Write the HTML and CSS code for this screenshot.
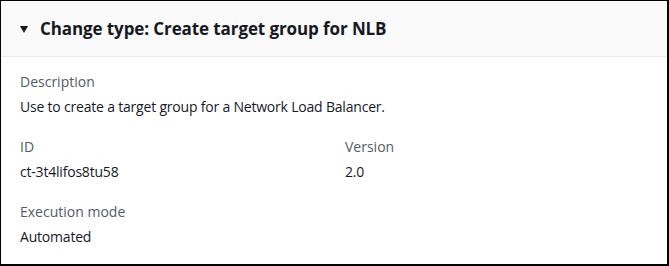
FILE: index.html
```html
<!DOCTYPE html>
<html lang="en">
   <head>
      <meta charset="UTF-8">
      <title>Change type</title>
      <link rel="stylesheet" href="styles.css">
   </head>
   <body>
      <div class="panel">
         <div class="panel-header">
            <span class="caret"></span>
            <h2>Change type: Create target group for NLB</h2>
         </div>
         <div class="panel-body">
            <div class="field">
               <div class="label">Description</div>
               <div class="value">Use to create a target group for a Network Load Balancer.</div>
            </div>
            <div class="row">
               <div class="field">
                  <div class="label">ID</div>
                  <div class="value">ct-3t4lifos8tu58</div>
               </div>
               <div class="field">
                  <div class="label">Version</div>
                  <div class="value">2.0</div>
               </div>
            </div>
            <div class="field">
               <div class="label">Execution mode</div>
               <div class="value">Automated</div>
            </div>
         </div>
      </div>
   </body>
</html>
```

FILE: styles.css
```css
* {
margin: 0;
padding: 0;
box-sizing: border-box;
}
body {
width: 669px;
height: 266px;
background: #fff;
font-family: "Open Sans", "Noto Sans", sans-serif;
color: #16191f;
}
.panel {
height: 266px;
border-top: 1px solid #000;
border-left: 1px solid #000;
border-right: 2px solid #000;
border-bottom: 2px solid #000;
}
.panel-header {
height: 56px;
background: #fafafa;
border-bottom: 1px solid #eaeded;
display: flex;
align-items: center;
padding-left: 19px;
}
.caret {
width: 0;
height: 0;
border-left: 4px solid transparent;
border-right: 4px solid transparent;
border-top: 7px solid #16191f;
margin-right: 12px;
margin-top: 1px;
}
h2 {
font-size: 17px;
font-weight: 700;
letter-spacing: -0.1px;
color: #16191f;
}
.panel-body {
padding: 15px 20px 0 19px;
display: flex;
flex-direction: column;
gap: 20px;
}
.row {
display: grid;
grid-template-columns: 325px 1fr;
}
.label {
font-size: 14px;
color: #545b64;
line-height: 20px;
margin-bottom: 5px;
}
.value {
font-size: 14px;
letter-spacing: -0.2px;
line-height: 20px;
}
```
